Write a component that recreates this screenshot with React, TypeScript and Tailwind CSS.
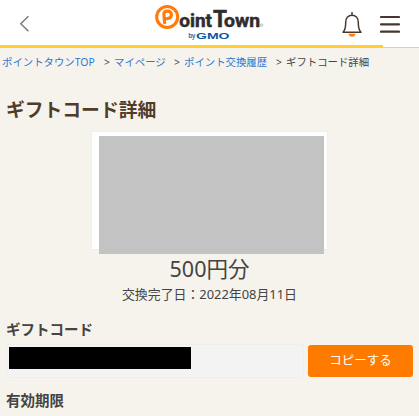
import React from 'react';

const breadcrumbs = [
  { label: 'ポイントタウンTOP', width: 'w-[102px]' },
  { label: 'マイページ', width: 'w-[60px]' },
  { label: 'ポイント交換履歴', width: 'w-[92px]' },
];

function Logo() {
  return (
    <svg width="112" height="38" viewBox="0 0 112 38" className="block">
      <circle cx="13.2" cy="13" r="10.5" fill="#fff" stroke="#ff7c0a" strokeWidth="3.1" />
      {/* tilted P mark */}
      <path d="M10.6 18.6 L9.9 9.5 Q10.4 7.4 13.2 7.2 Q17.4 7.1 17.4 11 Q17.2 14.5 13 14.7" fill="none" stroke="#ff7c0a" strokeWidth="3.2" strokeLinecap="round" strokeLinejoin="round" />
      <g fontFamily="Roboto, sans-serif" fontWeight="700" fill="#2f2c2d" stroke="#2f2c2d" strokeWidth="0.5" strokeLinejoin="round">
        <text x="25.2" y="22.9" fontSize="18.4" textLength="32.8" lengthAdjust="spacingAndGlyphs">oint</text>
        <text x="59" y="22.9" fontSize="23" textLength="14" lengthAdjust="spacingAndGlyphs">T</text>
        <text x="70" y="22.9" fontSize="18.4" textLength="36" lengthAdjust="spacingAndGlyphs">own</text>
      </g>
      <circle cx="107.6" cy="21.2" r="1.2" fill="none" stroke="#999" strokeWidth="0.7" />
      <g fontFamily="'Liberation Sans', sans-serif" fill="#0858a8">
        <text x="34.5" y="34" fontSize="8" textLength="6.8" lengthAdjust="spacingAndGlyphs" stroke="#0858a8" strokeWidth="0.2">by</text>
        <text x="42" y="35" fontSize="9.4" fontWeight="700" textLength="33.5" lengthAdjust="spacingAndGlyphs">GMO</text>
      </g>
    </svg>
  );
}

function BellIcon() {
  return (
    <svg width="22" height="28" viewBox="0 0 22 28" fill="none" className="block">
      <path d="M7.4 22.8 H14.6 Q14 25.8 11 25.8 Q8 25.8 7.4 22.8Z" fill="#ff7c0a" />
      <path d="M11 1.5 V4 M2 21.2 C4.4 19 4.7 17 4.7 11.5 C4.7 6.8 7.5 4.2 11 4.2 C14.5 4.2 17.3 6.8 17.3 11.5 C17.3 17 17.6 19 20 21.2 Z" stroke="#49372e" strokeWidth="1.5" strokeLinecap="round" strokeLinejoin="round" />
    </svg>
  );
}

export default function App() {
  return (
    <div className="h-[416px] w-[419px] overflow-hidden bg-[#f6f3ec] font-['Noto_Sans','Noto_Sans_CJK_JP',sans-serif] text-[#444]">
      <header className="flex h-[45px] items-start bg-white">
        <button className="ml-[18px] mt-[15px]" aria-label="戻る">
          <svg width="12" height="18" viewBox="0 0 12 18" fill="none" className="block">
            <path d="M10.4 1.3 L2.8 8.8 L10.4 16.3" stroke="#777" strokeWidth="1.4" />
          </svg>
        </button>
        <div className="ml-[124px] mt-1">
          <Logo />
        </div>
        <button className="ml-[75px] mt-[11px]" aria-label="お知らせ">
          <BellIcon />
        </button>
        <button className="ml-[17px] mt-[15px]" aria-label="メニュー">
          <svg width="20" height="18" viewBox="0 0 20 18" className="block">
            <path d="M1 2 H19 M1 9.3 H19 M1 16.6 H19" stroke="#49372e" strokeWidth="2.2" strokeLinecap="round" />
          </svg>
        </button>
      </header>
      <div className="flex h-[3px]">
        <div className="h-[3px] w-[383px] bg-[#ffce32]" />
        <div className="h-[3px] flex-1 border-b border-[#d3d0cc] bg-white" />
      </div>

      <nav className="flex h-7 items-center whitespace-nowrap pl-[2px] text-[10.4px] leading-7">
        {breadcrumbs.map((item) => (
          <React.Fragment key={item.label}>
            <a className={`${item.width} text-[#2d78d0]`}>{item.label}</a>
            <span className="w-[10px]">&gt;</span>
          </React.Fragment>
        ))}
        <span>ギフトコード詳細</span>
      </nav>

      <main>
        <h1 className="mt-5 pl-[6px] text-[18.8px] font-bold leading-[28px] text-[#513c2a]">ギフトコード詳細</h1>

        <div className="ml-[91px] mt-[7px] h-[119px] w-[237px] border border-[#f0efed] bg-white pl-[7px] pt-[4px]">
          <div className="h-[118px] w-[225px] bg-[#c3c3c3]" />
        </div>

        <p className="mt-[4px] text-center text-[21.5px] leading-[30px]">500円分</p>
        <p className="text-center text-[12.9px] leading-5">交換完了日：2022年08月11日</p>

        <h2 className="mt-[14px] pl-[6px] text-[14.5px] font-bold leading-[22px]">ギフトコード</h2>
        <div className="mt-[4px] flex pl-[6px]">
          <div className="h-[34px] w-[298px] rounded-[3px] border border-[#efeeec] bg-[#f3f3f3] pl-[2px] pt-[2px]">
            <div className="h-[22px] w-[182px] bg-black" />
          </div>
          <button className="ml-1 mt-px h-[32px] w-[105px] rounded-[3px] bg-[#ff7b00] text-[12.5px] leading-8 text-white">コピーする</button>
        </div>

        <h2 className="mt-[11px] pl-[6px] text-[14.5px] font-bold leading-[22px]">有効期限</h2>
      </main>
    </div>
  );
}
